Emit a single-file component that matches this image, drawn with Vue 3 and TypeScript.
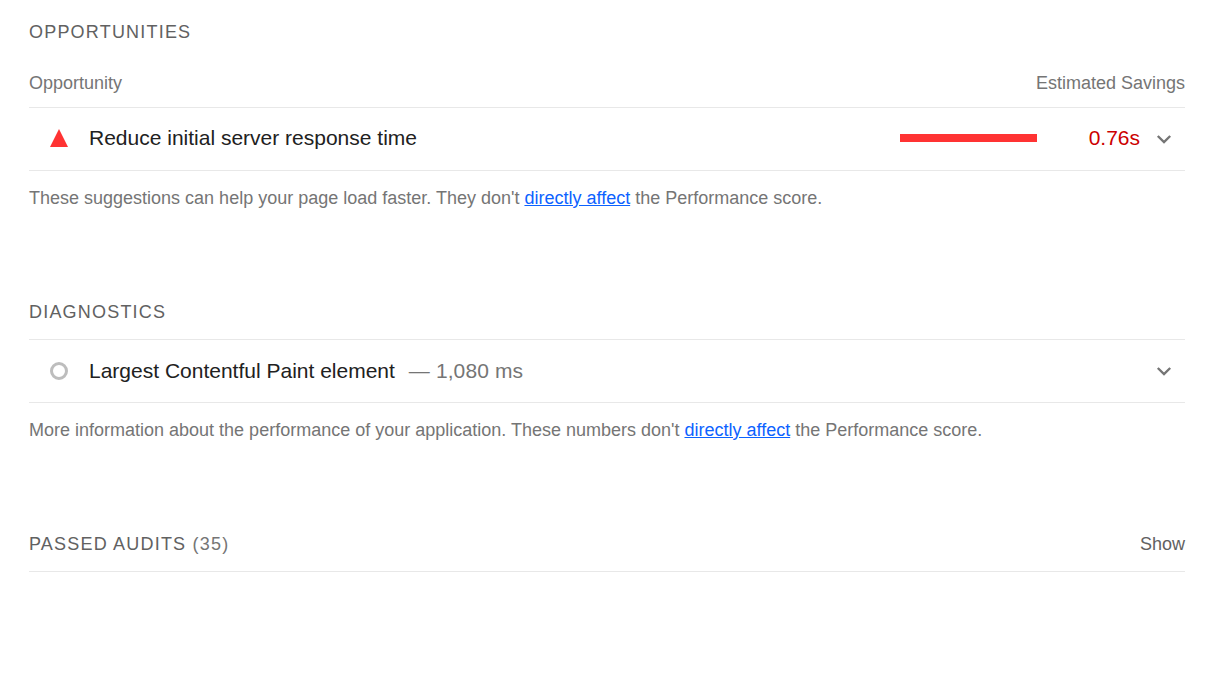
<script setup lang="ts">
const chevron = 'M1.8 2l6.2 6 6.2-6';
</script>

<template>
  <main class="report">
    <section class="group opportunities">
      <h2 class="title">OPPORTUNITIES</h2>
      <div class="cols"><span>Opportunity</span><span>Estimated Savings</span></div>
      <div class="row first">
        <svg class="icon" width="18" height="18" viewBox="0 0 18 18"><path d="M9 0L18 18H0Z" fill="#ff3333" /></svg>
        <span class="name">Reduce initial server response time</span>
        <span class="bar"></span>
        <span class="savings">0.76s</span>
        <svg class="chev" width="16" height="10" viewBox="0 0 16 10"><path :d="chevron" fill="none" stroke="#757575" stroke-width="2.4" /></svg>
      </div>
      <p class="note">These suggestions can help your page load faster. They don't <a href="#">directly affect</a> the Performance score.</p>
    </section>

    <section class="group diagnostics">
      <h2 class="title">DIAGNOSTICS</h2>
      <div class="row top">
        <svg class="icon" width="18" height="18" viewBox="0 0 18 18"><circle cx="9" cy="9" r="7.5" fill="none" stroke="#bdbdbd" stroke-width="3" /></svg>
        <span class="name">Largest Contentful Paint element</span>
        <span class="display">— 1,080 ms</span>
        <svg class="chev push" width="16" height="10" viewBox="0 0 16 10"><path :d="chevron" fill="none" stroke="#757575" stroke-width="2.4" /></svg>
      </div>
      <p class="note">More information about the performance of your application. These numbers don't <a href="#">directly affect</a> the Performance score.</p>
    </section>

    <section class="passed">
      <h2 class="title">PASSED AUDITS <span class="count">(35)</span></h2>
      <span class="show">Show</span>
    </section>
  </main>
</template>

<style>
html, body { margin: 0; background: #fff; }
</style>

<style scoped>
.report {
  padding: 0 28px 0 29px;
  height: 690px;
  box-sizing: border-box;
  font-family: "Liberation Sans", Arial, sans-serif;
  overflow: hidden;
}
.title {
  margin: 0;
  font-size: 18px;
  line-height: 24px;
  font-weight: 400;
  letter-spacing: 1.2px;
  color: #616161;
}
.opportunities { padding-top: 20px; }
.cols {
  display: flex;
  justify-content: space-between;
  margin-top: 27px;
  padding-bottom: 11px;
  line-height: 25px;
  font-size: 18px;
  color: #757575;
  border-bottom: 1px solid #e8e8e8;
}
.row {
  display: flex;
  align-items: center;
  height: 62px;
  border-bottom: 1px solid #e8e8e8;
  padding-left: 21px;
}
.row.top { border-top: 1px solid #e8e8e8; margin-top: 15px; }
.first .icon,
.first .name,
.first .savings { margin-bottom: 2px; }
.icon { flex: none; margin-right: 21px; }
.name { font-size: 21px; color: #212121; }
.bar {
  width: 137px;
  height: 8px;
  margin-left: auto;
  margin-right: 52px;
  margin-bottom: 2px;
  background: #ff3333;
}
.savings { font-size: 21px; color: #c00; margin-right: 16px; }
.chev { flex: none; margin-right: 13px; }
.push { margin-left: auto; }
.display { font-size: 21px; letter-spacing: 0.1px; color: #757575; margin-left: 14px; }
.note {
  margin: 15px 0 0;
  font-size: 18px;
  line-height: 24px;
  color: #757575;
}
.note a { color: #0c62ff; }
.diagnostics { margin-top: 90px; }
.passed {
  display: flex;
  justify-content: space-between;
  align-items: center;
  margin-top: 90px;
  padding-bottom: 15px;
  border-bottom: 1px solid #e8e8e8;
}
.count { color: #757575; }
.show { font-size: 18px; color: #616161; }
</style>
